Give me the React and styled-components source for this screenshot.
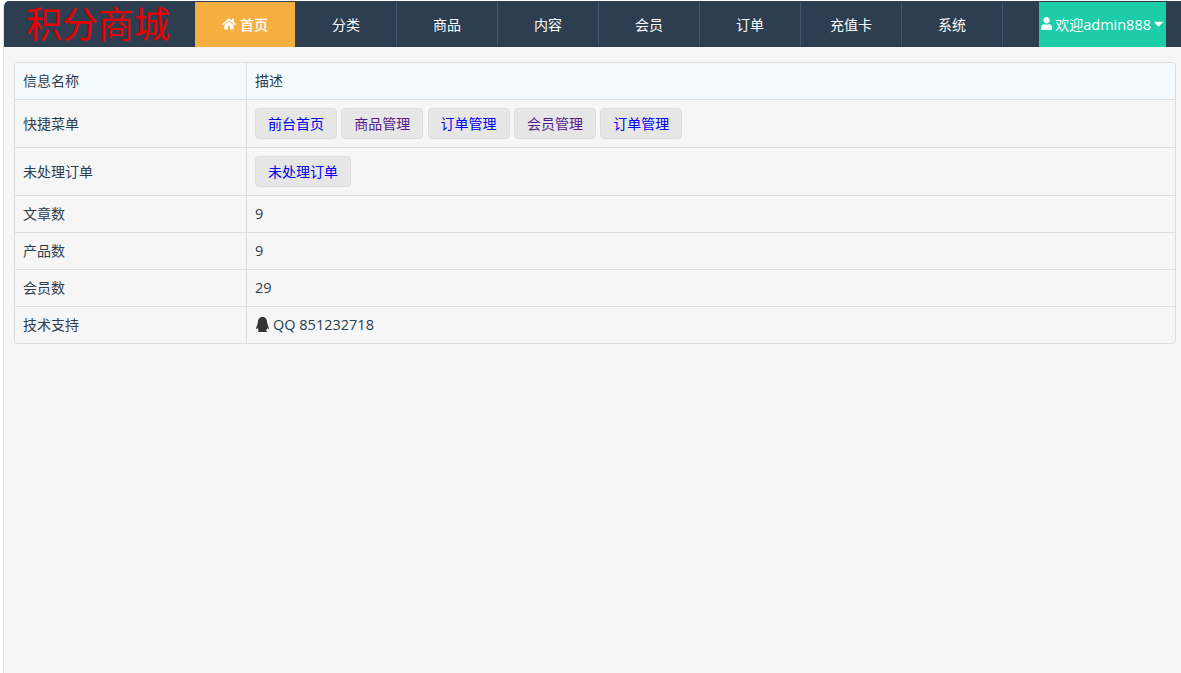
import React from 'react';
import styled, { createGlobalStyle } from 'styled-components';
import { FaHome, FaUser, FaQq, FaCaretDown } from 'react-icons/fa';

const GlobalStyle = createGlobalStyle`
  html, body {
    margin: 0;
    padding: 0;
    background: #fff;
  }
  body {
    font-family: "Open Sans", "Noto Sans CJK SC", sans-serif;
    font-size: 14px;
    color: #2c3e50;
  }
`;

const Page = styled.div`
  margin: 1px 0 0 3px;
  height: 672px;
  box-sizing: border-box;
  overflow: hidden;
  background: #f6f6f6;
  border-left: 1px solid #ddd;
  border-top-left-radius: 6px;
`;

const NavBar = styled.nav`
  display: flex;
  height: 46px;
  background: #2c3e50;
  border-top: 1px solid #2c3e50;
  box-sizing: border-box;
`;

const Brand = styled.div`
  width: 191px;
  padding-left: 22px;
  box-sizing: border-box;
  font-size: 36px;
  line-height: 46px;
  color: #e60000;
  white-space: nowrap;
`;

const NavItem = styled.a`
  width: 101px;
  box-sizing: border-box;
  padding-bottom: 2px;
  display: flex;
  align-items: center;
  justify-content: center;
  gap: 4px;
  color: #fff;
  font-size: 14px;
  font-weight: ${(p) => (p.$active ? 500 : 400)};
  background: ${(p) => (p.$active ? '#f6b042' : 'transparent')};
  border-right: 1px solid ${(p) => (p.$active ? '#2c3e50' : '#43566b')};
`;

const UserMenu = styled.a`
  margin-left: 36px;
  width: 127px;
  box-sizing: border-box;
  padding: 0 0 2px 2px;
  display: flex;
  align-items: center;
  gap: 3px;
  color: #fff;
  font-size: 14px;
  white-space: nowrap;
  background: #1dcca9;
`;

const Caret = styled(FaCaretDown)`
  margin-left: -3px;
  flex: none;
`;

const Latin = styled.span`
  font-size: 14.5px;
`;

const Content = styled.main`
  padding: 15px 5px 0 10px;
`;

const Table = styled.div`
  border: 1px solid #ddd;
  border-radius: 4px;
  overflow: hidden;
`;

const Row = styled.div`
  display: grid;
  grid-template-columns: 232px 1fr;
  background: ${(p) => (p.$head ? '#f5faff' : 'transparent')};
  border-top: ${(p) => (p.$first ? 'none' : '1px solid #ddd')};
`;

const LabelCell = styled.div`
  display: flex;
  align-items: center;
  box-sizing: border-box;
  padding: 0 8px 2px;
  height: ${(p) => p.$height}px;
  border-right: 1px solid #ddd;
`;

const ValueCell = styled.div`
  display: flex;
  align-items: center;
  gap: ${(p) => p.$gap || 0}px;
  padding: ${(p) => (p.$buttons ? '0 8px' : '0 8px 2px')};
`;

const ButtonRow = styled.div`
  display: flex;
  gap: 4.3px;
`;

const LinkButton = styled.a`
  height: 31px;
  box-sizing: border-box;
  padding: 0 12px 2px;
  display: flex;
  align-items: center;
  white-space: nowrap;
  color: ${(p) => (p.$visited ? '#551a8b' : '#0000ee')};
  background: #e6e6e6;
  border: 1px solid #ddd;
  border-radius: 4px;
`;

const navLinks = ['分类', '商品', '内容', '会员', '订单', '充值卡', '系统'];

const quickLinks = [
  { text: '前台首页' },
  { text: '商品管理', visited: true },
  { text: '订单管理' },
  { text: '会员管理', visited: true },
  { text: '订单管理' }
];

const App = () => {
  return (
    <>
      <GlobalStyle />
      <Page>
        <NavBar>
          <Brand>积分商城</Brand>
          <NavItem $active>
            <FaHome size={14} />
            首页
          </NavItem>
          {navLinks.map((text) => (
            <NavItem key={text}>{text}</NavItem>
          ))}
          <UserMenu>
            <FaUser size={13} />
            <span>
              欢迎<Latin>admin888</Latin>
            </span>
            <Caret size={15} />
          </UserMenu>
        </NavBar>

        <Content>
          <Table>
            <Row $head $first>
              <LabelCell $height={36}>信息名称</LabelCell>
              <ValueCell>描述</ValueCell>
            </Row>
            <Row>
              <LabelCell $height={47}>快捷菜单</LabelCell>
              <ValueCell $buttons>
                <ButtonRow>
                  {quickLinks.map((link, i) => (
                    <LinkButton key={i} $visited={link.visited}>
                      {link.text}
                    </LinkButton>
                  ))}
                </ButtonRow>
              </ValueCell>
            </Row>
            <Row>
              <LabelCell $height={47}>未处理订单</LabelCell>
              <ValueCell $buttons>
                <LinkButton>未处理订单</LinkButton>
              </ValueCell>
            </Row>
            <Row>
              <LabelCell $height={36}>文章数</LabelCell>
              <ValueCell>
                <Latin>9</Latin>
              </ValueCell>
            </Row>
            <Row>
              <LabelCell $height={36}>产品数</LabelCell>
              <ValueCell>
                <Latin>9</Latin>
              </ValueCell>
            </Row>
            <Row>
              <LabelCell $height={36}>会员数</LabelCell>
              <ValueCell>
                <Latin>29</Latin>
              </ValueCell>
            </Row>
            <Row>
              <LabelCell $height={36}>技术支持</LabelCell>
              <ValueCell $gap={3}>
                <FaQq size={15} color="#333" />
                <Latin>QQ 851232718</Latin>
              </ValueCell>
            </Row>
          </Table>
        </Content>
      </Page>
    </>
  );
};

export default App;
